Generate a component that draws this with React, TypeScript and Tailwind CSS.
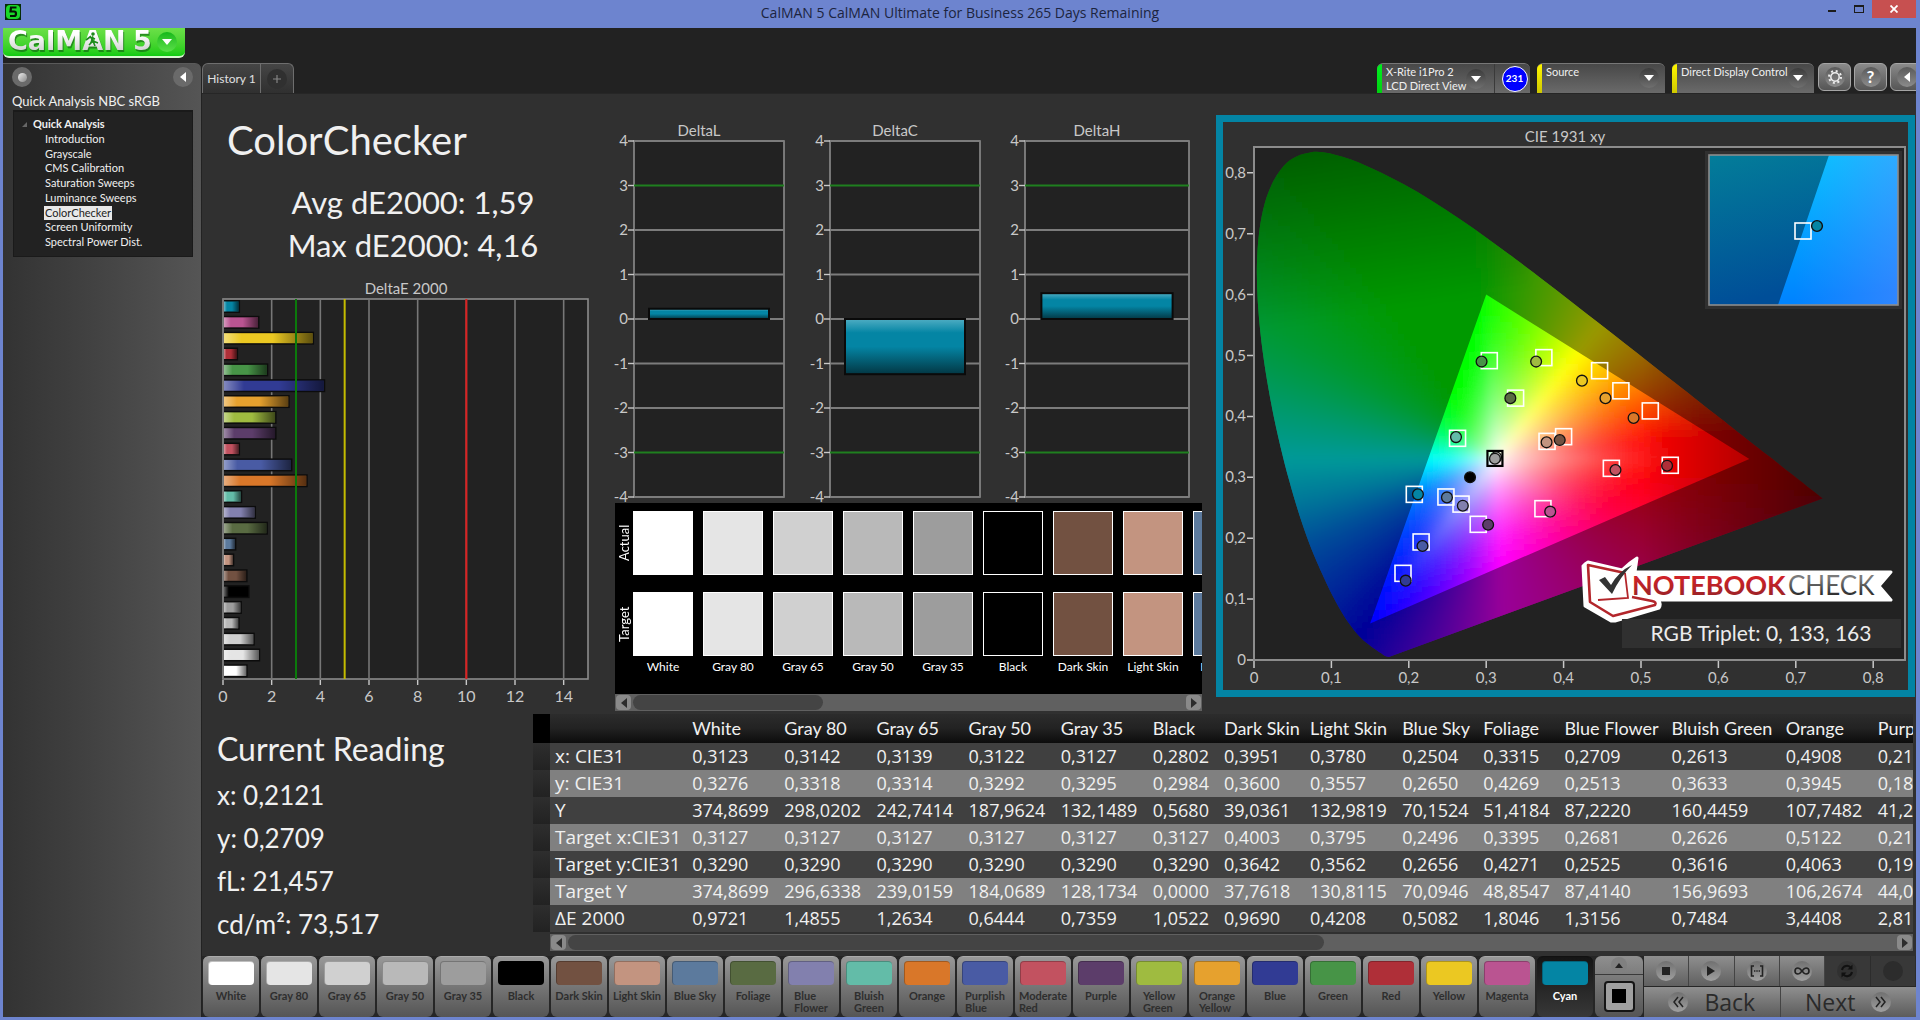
import { type ReactNode } from "react";

type Patch = { name: string; color: string; de: number; wrap?: boolean };

const patches: Patch[] = [
    { name: "White", color: "#ffffff", de: 0.9721 },
    { name: "Gray 80", color: "#e5e5e5", de: 1.4855 },
    { name: "Gray 65", color: "#d0d0d0", de: 1.2634 },
    { name: "Gray 50", color: "#b9b9b9", de: 0.6444 },
    { name: "Gray 35", color: "#9d9d9d", de: 0.7359 },
    { name: "Black", color: "#000000", de: 1.0522 },
    { name: "Dark Skin", color: "#725141", de: 0.969 },
    { name: "Light Skin", color: "#c39480", de: 0.4208 },
    { name: "Blue Sky", color: "#5c7a9d", de: 0.5082 },
    { name: "Foliage", color: "#596b42", de: 1.8046 },
    { name: "Blue Flower", color: "#8280ae", de: 1.3156, wrap: true },
    { name: "Bluish Green", color: "#63bca8", de: 0.7484, wrap: true },
    { name: "Orange", color: "#d97729", de: 3.4408 },
    { name: "Purplish Blue", color: "#495ba4", de: 2.8134, wrap: true },
    { name: "Moderate Red", color: "#c25260", de: 0.66, wrap: true },
    { name: "Purple", color: "#5c3d6a", de: 2.16 },
    { name: "Yellow Green", color: "#9fbb40", de: 2.16, wrap: true },
    { name: "Orange Yellow", color: "#e6a12e", de: 2.7, wrap: true },
    { name: "Blue", color: "#313b94", de: 4.16 },
    { name: "Green", color: "#479447", de: 1.82 },
    { name: "Red", color: "#af2f38", de: 0.58 },
    { name: "Yellow", color: "#ebc822", de: 3.7 },
    { name: "Magenta", color: "#ba5491", de: 1.46 },
    { name: "Cyan", color: "#0485a4", de: 0.66 },
];

const treeItems = [
    "Introduction",
    "Grayscale",
    "CMS Calibration",
    "Saturation Sweeps",
    "Luminance Sweeps",
    "ColorChecker",
    "Screen Uniformity",
    "Spectral Power Dist.",
];

const tableRows: { label: string; values: string[] }[] = [
    { label: "x: CIE31", values: ["0,3123", "0,3142", "0,3139", "0,3122", "0,3127", "0,2802", "0,3951", "0,3780", "0,2504", "0,3315", "0,2709", "0,2613", "0,4908", "0,21"] },
    { label: "y: CIE31", values: ["0,3276", "0,3318", "0,3314", "0,3292", "0,3295", "0,2984", "0,3600", "0,3557", "0,2650", "0,4269", "0,2513", "0,3633", "0,3945", "0,18"] },
    { label: "Y", values: ["374,8699", "298,0202", "242,7414", "187,9624", "132,1489", "0,5680", "39,0361", "132,9819", "70,1524", "51,4184", "87,2220", "160,4459", "107,7482", "41,2"] },
    { label: "Target x:CIE31", values: ["0,3127", "0,3127", "0,3127", "0,3127", "0,3127", "0,3127", "0,4003", "0,3795", "0,2496", "0,3395", "0,2681", "0,2626", "0,5122", "0,21"] },
    { label: "Target y:CIE31", values: ["0,3290", "0,3290", "0,3290", "0,3290", "0,3290", "0,3290", "0,3642", "0,3562", "0,2656", "0,4271", "0,2525", "0,3616", "0,4063", "0,19"] },
    { label: "Target Y", values: ["374,8699", "296,6338", "239,0159", "184,0689", "128,1734", "0,0000", "37,7618", "130,8115", "70,0946", "48,8547", "87,4140", "156,9693", "106,2674", "44,0"] },
    { label: "ΔE 2000", values: ["0,9721", "1,4855", "1,2634", "0,6444", "0,7359", "1,0522", "0,9690", "0,4208", "0,5082", "1,8046", "1,3156", "0,7484", "3,4408", "2,81"] },
];

const columnClasses = [
    "w-[92px]", "w-[92px]", "w-[92px]", "w-[92px]", "w-[92px]", "w-[71px]", "w-[86px]",
    "w-[92px]", "w-[81px]", "w-[81px]", "w-[107px]", "w-[114px]", "w-[92px]", "w-[60px]",
];

/* ---------- CIE diagram ---------- */

const locus: [number, number][] = [
    [0.1741, 0.005], [0.1689, 0.0069], [0.1644, 0.0109],
    [0.1566, 0.0177], [0.144, 0.0297], [0.1355, 0.0399], [0.1241, 0.0578], [0.1096, 0.0868],
    [0.0913, 0.1327], [0.0687, 0.2007], [0.0454, 0.295], [0.0235, 0.4127], [0.0082, 0.5384],
    [0.0039, 0.6548], [0.0139, 0.7502], [0.0389, 0.812], [0.0743, 0.8338], [0.1142, 0.8262],
    [0.1547, 0.8059], [0.1929, 0.7816], [0.2296, 0.7543], [0.2658, 0.7243], [0.3016, 0.6923],
    [0.3373, 0.6589], [0.3731, 0.6245], [0.4087, 0.5896], [0.4441, 0.5547], [0.4788, 0.5202],
    [0.5125, 0.4866], [0.5448, 0.4544], [0.5752, 0.4242], [0.6029, 0.3965], [0.627, 0.3725],
    [0.6658, 0.334], [0.6915, 0.3083], [0.714, 0.2859], [0.7347, 0.2653],
];

const targets: [number, number][] = [
    [0.304, 0.4915], [0.3745, 0.4965], [0.4465, 0.475], [0.474, 0.442], [0.512, 0.409],
    [0.338, 0.43], [0.263, 0.364], [0.3786, 0.359], [0.4, 0.3667], [0.4617, 0.3147],
    [0.5378, 0.3197], [0.2071, 0.272], [0.248, 0.2677], [0.2675, 0.256], [0.2897, 0.2228],
    [0.3733, 0.2485], [0.2159, 0.1938], [0.1925, 0.1423],
];

const readings: [number, number, string][] = [
    [0.294, 0.49, "#479447"], [0.3645, 0.49, "#9fbb40"], [0.4237, 0.4587, "#ebc822"],
    [0.4541, 0.43, "#e6a12e"], [0.4904, 0.3974, "#d97729"], [0.3312, 0.43, "#596b42"],
    [0.261, 0.366, "#63bca8"], [0.378, 0.3574, "#c39480"], [0.395, 0.3612, "#725141"],
    [0.2791, 0.3, "#000000"], [0.467, 0.312, "#c25260"], [0.5337, 0.319, "#af2f38"],
    [0.2118, 0.272, "#0485a4"], [0.2493, 0.267, "#5c7a9d"], [0.2698, 0.2534, "#8280ae"],
    [0.3025, 0.2222, "#5c3d6a"], [0.3827, 0.2436, "#ba5491"], [0.2177, 0.1872, "#495ba4"],
    [0.196, 0.1303, "#313b94"], [0.3127, 0.333, "#d0d0d0"], [0.3113, 0.3305, "#9d9d9d"],
];

const X0 = 31;
const Y0 = 538;
const px = (x: number) => X0 + x * 774;
const py = (y: number) => Y0 - y * 609;

const WHITE = [0.3127, 0.329];
const gamut: [number, number][] = [[0.64, 0.33], [0.3, 0.6], [0.15, 0.06]];

// fully saturated colour by direction from the white point, in degrees
const hues: [number, number, number, number][] = [
    [-180, 0, 1, 1],
    [-165, 0, 0.78, 1],
    [-150, 0, 0.5, 1],
    [-134, 0, 0.25, 1],
    [-121, 0, 0, 1],
    [-88, 1, 0, 1],
    [-48, 1, 0, 0.5],
    [-23, 1, 0, 0.2],
    [-4, 1, 0, 0],
    [8, 1, 0, 0],
    [58.7, 1, 1, 0],
    [95, 0, 1, 0],
    [118, 0, 1, 0],
    [130, 0, 1, 0.14],
    [143, 0, 1, 0.32],
    [152, 0, 1, 0.48],
    [165, 0, 1, 0.73],
    [180, 0, 1, 1],
];

function edgeDistance(dx: number, dy: number) {
    let best = Infinity;
    for (let i = 0; i < 3; i++) {
        const [ax, ay] = gamut[i];
        const [bx, by] = gamut[(i + 1) % 3];
        const ex = bx - ax;
        const ey = by - ay;
        const det = dx * ey - dy * ex;
        const t = ((ax - WHITE[0]) * ey - (ay - WHITE[1]) * ex) / det;
        if (t > 0 && t < best) best = t;
    }
    return best;
}

function chromaColor(x: number, y: number) {
    const dx = x - WHITE[0];
    const dy = y - WHITE[1];
    const r = Math.hypot(dx, dy) || 0.0001;
    const angle = (Math.atan2(dy, dx) * 180) / Math.PI;
    let k = 1;
    while (k < hues.length - 1 && hues[k][0] < angle) k++;
    const a = hues[k - 1];
    const b = hues[k];
    const f = (angle - a[0]) / (b[0] - a[0]);
    // red reaches full saturation well before its corner of the triangle
    const reach = angle > -40 && angle < 40 ? 1 + 0.25 * (1 - Math.abs(angle) / 40) : 1;
    const s = Math.min(1, (r / edgeDistance(dx / r, dy / r)) * reach);
    const wash = Math.pow(1 - s, 1.6);
    const dim =
        (1 - Math.max(0, x - 0.5) * 2.1) *
        (1 - (x < 0.36 ? Math.max(0, y - 0.6 + (0.3 - x) * 0.2) * 1.35 : 0));
    const rgb = [1, 2, 3].map((c) => {
        const h = a[c] + (b[c] - a[c]) * f;
        return Math.round(255 * dim * (h + (1 - h) * wash));
    });
    return `rgb(${rgb.join(",")})`;
}

const CELL = 6;
const cells: { x: number; y: number; fill: string }[] = [];
for (let cx = X0 - 12; cx < 630; cx += CELL) {
    for (let cy = 8; cy < Y0 + 12; cy += CELL) {
        const x = (cx + CELL / 2 - X0) / 774;
        const y = (Y0 - cy - CELL / 2) / 609;
        if (x + y > 1.08) continue;
        cells.push({ x: cx, y: cy, fill: chromaColor(x, y) });
    }
}

function smoothPath(pts: [number, number][]) {
    const p = pts.map(([x, y]) => [px(x), py(y)]);
    let d = `M${p[0][0]} ${p[0][1]}`;
    for (let i = 0; i < p.length - 1; i++) {
        const p0 = p[i - 1] ?? p[i];
        const [p1, p2] = [p[i], p[i + 1]];
        const p3 = p[i + 2] ?? p2;
        d += `C${p1[0] + (p2[0] - p0[0]) / 6} ${p1[1] + (p2[1] - p0[1]) / 6} ${p2[0] - (p3[0] - p1[0]) / 6} ${p2[1] - (p3[1] - p1[1]) / 6} ${p2[0]} ${p2[1]}`;
    }
    return d + "Z";
}

function CieChart() {
    const ticks = [0, 1, 2, 3, 4, 5, 6, 7, 8];
    const label = (t: number) => (t === 0 ? "0" : `0,${t}`);
    return (
        <svg viewBox="0 0 685 568" className="block w-full bg-[#303030] font-['Lato',sans-serif]">
            <defs>
                <clipPath id="locus"><path d={smoothPath(locus)} /></clipPath>
                <filter id="soften" x="0" y="0" width="1" height="1"><feGaussianBlur stdDeviation="4" /></filter>
                <linearGradient id="insetDark" x1="0" y1="0" x2="0.2" y2="1">
                    <stop offset="0" stopColor="#037d99" />
                    <stop offset="1" stopColor="#004e98" />
                </linearGradient>
                <linearGradient id="insetLight" x1="0" y1="0" x2="0.1" y2="1">
                    <stop offset="0" stopColor="#00caff" />
                    <stop offset="0.6" stopColor="#009eff" />
                    <stop offset="1" stopColor="#0084ff" />
                </linearGradient>
                <linearGradient id="insetEdge" x1="0" y1="0" x2="1" y2="0">
                    <stop offset="0.45" stopColor="#7088ff" stopOpacity="0" />
                    <stop offset="1" stopColor="#7088ff" stopOpacity="0.42" />
                </linearGradient>
                <linearGradient id="nbRed" x1="0" y1="0" x2="0" y2="1">
                    <stop offset="0.3" stopColor="#cf2228" />
                    <stop offset="1" stopColor="#8d2226" />
                </linearGradient>
                <linearGradient id="nbGray" x1="0" y1="0" x2="0" y2="1">
                    <stop offset="0.3" stopColor="#7a7a7a" />
                    <stop offset="1" stopColor="#111111" />
                </linearGradient>
            </defs>
            <text x="342" y="20" textAnchor="middle" fontSize="15" fill="#c8c8c8">CIE 1931 xy</text>
            <rect x="31" y="25" width="651" height="513" fill="#222222" stroke="#8c8c8c" strokeWidth="2" />
            <g clipPath="url(#locus)">
                <g filter="url(#soften)" shapeRendering="crispEdges">
                    {cells.map((c) => (
                        <rect key={`${c.x}-${c.y}`} x={c.x} y={c.y} width={CELL} height={CELL} fill={c.fill} />
                    ))}
                </g>
                <path
                    fillRule="evenodd"
                    fill="#000"
                    fillOpacity="0.4"
                    d={`M0 0H685V568H0Z M${gamut.map(([x, y]) => `${px(x)} ${py(y)}`).join(" L")}Z`}
                />
            </g>

            {ticks.map((t) => (
                <g key={t} fill="#c8c8c8" fontSize="15">
                    <path d={`M${px(t / 10)} 539v7 M24 ${py(t / 10)}h6`} stroke="#c8c8c8" strokeWidth="1.5" />
                    <text x={px(t / 10)} y="561" textAnchor="middle">{label(t)}</text>
                    <text x="23" y={py(t / 10) + 5} textAnchor="end">{label(t)}</text>
                </g>
            ))}

            {targets.map(([x, y]) => (
                <rect key={`${x}-${y}`} x={px(x) - 8} y={py(y) - 8} width="16" height="16" fill="none" stroke="#fff" strokeWidth="1.6" />
            ))}
            {readings.map(([x, y, fill]) => (
                <circle key={`${x}-${y}`} cx={px(x)} cy={py(y)} r="5.4" fill={fill} stroke="#111" strokeWidth="1.3" />
            ))}
            <rect x={px(0.3113) - 7.5} y={py(0.331) - 7.5} width="15" height="15" fill="none" stroke="#000" strokeWidth="2.2" />

            {/* zoomed inset around the selected patch */}
            <rect x="482" y="29" width="197" height="158" fill="#303030" />
            <rect x="486" y="33" width="189" height="150" fill="url(#insetLight)" />
            <rect x="486" y="33" width="189" height="150" fill="url(#insetEdge)" />
            <path d="M486 33H606L555 183H486Z" fill="url(#insetDark)" />
            <rect x="486" y="33" width="189" height="150" fill="none" stroke="#8c8c8c" strokeWidth="1.6" />
            <rect x="572" y="101" width="16" height="16" fill="none" stroke="#fff" strokeWidth="1.6" />
            <circle cx="594" cy="104" r="5.4" fill="#0485a4" stroke="#111" strokeWidth="1.4" />

            {/* watermark */}
            <g transform="translate(-1223 -122)">
                <path
                    d="M1585 564 L1588 562 L1622 570 Q1629 563 1637 558 L1635 572 H1891 L1879 586 L1891 600 H1657 Q1662 603 1659 608 L1615 621 L1611 621 L1585 606 L1583 566Z"
                    fill="#fff"
                    stroke="#fff"
                    strokeWidth="3"
                    strokeLinejoin="round"
                />
                <path d="M1625 573 L1588 565 L1590 602 L1613 616 L1655 605 Q1657 602 1652 601 L1632 597" fill="none" stroke="#b3262b" strokeWidth="2.6" strokeLinejoin="round" />
                <path d="M1625 573 L1628 598 L1598 600" fill="none" stroke="#b3262b" strokeWidth="1.8" />
                <path d="M1599 580 L1605 577 L1611 585 Q1619 571 1632 565 Q1620 577 1612 594 Z" fill="#333" />
                <text x="1632" y="595" fontSize="27" fontWeight="700" fill="url(#nbRed)">NOTEBOOK</text>
                <text x="1788" y="595" fontSize="26" fill="url(#nbGray)">CHECK</text>
            </g>

            <rect x="399" y="497" width="279" height="29" fill="#303030" />
            <text x="538" y="519" textAnchor="middle" fontSize="21" fill="#ececec">RGB Triplet: 0, 133, 163</text>
        </svg>
    );
}

/* ---------- bar charts ---------- */

function DeltaEChart() {
    const unit = 365 / 15;
    const bars = [...patches].reverse();
    const line = (v: number, color: string) => (
        <path d={`M${21 + v * unit} 29v380`} stroke={color} strokeWidth="2" />
    );
    return (
        <svg viewBox="0 0 402 440" className="block w-full font-['Lato',sans-serif]">
            <defs>
                <linearGradient id="barShade" x1="0" y1="0" x2="1" y2="0">
                    <stop offset="0" stopColor="#fff" stopOpacity="0.4" />
                    <stop offset="0.2" stopColor="#fff" stopOpacity="0" />
                    <stop offset="0.55" stopColor="#000" stopOpacity="0" />
                    <stop offset="1" stopColor="#000" stopOpacity="0.6" />
                </linearGradient>
            </defs>
            <text x="204" y="24" textAnchor="middle" fontSize="15" fill="#c8c8c8">DeltaE 2000</text>
            <rect x="21" y="29" width="365" height="380" fill="#222" stroke="#8c8c8c" strokeWidth="1.6" />
            {[0, 2, 4, 6, 8, 10, 12, 14].map((v) => (
                <g key={v}>
                    <path d={`M${21 + v * unit} 29v380`} stroke="#777" strokeWidth="1.6" />
                    <path d={`M${21 + v * unit} 410v5`} stroke="#c8c8c8" strokeWidth="1.4" />
                    <text x={21 + v * unit} y="432" textAnchor="middle" fontSize="16" fill="#c8c8c8">{v}</text>
                </g>
            ))}
            {bars.map((b, i) => {
                const y = 30.5 + i * 15.84;
                return (
                    <g key={b.name}>
                        <rect x="22" y={y - 0.5} width={b.de * unit} height="13" fill="#0c0c0c" />
                        <rect x="22" y={y + 1} width={b.de * unit - 1.5} height="10" fill={b.color} />
                        <rect x="22" y={y + 1} width={b.de * unit - 1.5} height="10" fill="url(#barShade)" />
                    </g>
                );
            })}
            {line(3, "#0b7a0b")}
            {line(5, "#c4bc00")}
            {line(10, "#dd2020")}
        </svg>
    );
}

function DeltaChart({ title, value, width, plot }: { title: string; value: number; width: number; plot: number }) {
    const zero = 199;
    const unit = 44.5;
    const h = Math.abs(value) * unit;
    const y = value > 0 ? zero - h : zero;
    return (
        <svg viewBox={`0 0 ${width} 383`} className="block min-w-0 overflow-visible font-['Lato',sans-serif]" style={{ width }}>
            <defs>
                <linearGradient id="glass" x1="0" y1="0" x2="0" y2="1">
                    <stop offset="0" stopColor="#4fadc3" />
                    <stop offset="0.25" stopColor="#0485a4" />
                    <stop offset="0.5" stopColor="#0485a4" />
                    <stop offset="1" stopColor="#033744" />
                </linearGradient>
            </defs>
            <text x={20 + plot / 2} y="16" textAnchor="middle" fontSize="15" fill="#c8c8c8">{title}</text>
            <rect x="30" y="21" width={plot} height="356" fill="#222" stroke="#8c8c8c" strokeWidth="1.6" />
            {[4, 3, 2, 1, 0, -1, -2, -3, -4].map((v) => (
                <g key={v}>
                    <path
                        d={`M30 ${zero - v * unit}h${plot}`}
                        stroke={Math.abs(v) === 3 ? "#1f7f1f" : "#7c7c7c"}
                        strokeWidth="1.8"
                    />
                    <path d={`M24 ${zero - v * unit}h6`} stroke="#c8c8c8" strokeWidth="1.4" />
                    <text x="24" y={zero - v * unit + 5} textAnchor="end" fontSize="15" fill="#c8c8c8">{v}</text>
                </g>
            ))}
            <rect x={30 + plot * 0.1} y={y} width={plot * 0.8} height={h} fill="url(#glass)" stroke="#0a0a0a" strokeWidth="2" />
        </svg>
    );
}

/* ---------- small parts ---------- */

function ScrollBar({ thumb, label }: { thumb: string; label: string }) {
    const arrow = "flex h-[15px] w-[15px] items-center justify-center rounded-sm bg-[#8a8a8a]";
    return (
        <div className="flex h-[17px] items-center bg-[#606060] px-px">
            <button className={arrow} aria-label={`Scroll ${label} left`}>
                <svg viewBox="0 0 8 10" className="h-2.5 w-2"><path d="M7 0v10L1 5z" fill="#2c2c2c" /></svg>
            </button>
            <div className="flex flex-1 px-0.5">
                <div className={`h-[15px] rounded-lg bg-[#444] ${thumb}`} />
            </div>
            <button className={arrow} aria-label={`Scroll ${label} right`}>
                <svg viewBox="0 0 8 10" className="h-2.5 w-2"><path d="M1 0v10l6-5z" fill="#2c2c2c" /></svg>
            </button>
        </div>
    );
}

function Round({ children, className = "" }: { children?: ReactNode; className?: string }) {
    return (
        <span className={`flex h-5 w-5 shrink-0 items-center justify-center rounded-full ${className}`}>{children}</span>
    );
}

const DownArrow = () => (
    <svg viewBox="0 0 10 6" className="h-1.5 w-2.5"><path d="M0 0h10L5 6z" fill="#fff" /></svg>
);

function DeviceSelect({ name, className, option }: { name: string; className: string; option: string }) {
    return (
        <div className={`relative flex h-[30px] overflow-hidden rounded-t-md border-t border-[#777] bg-linear-to-b from-[#484848] to-[#6a6a6a] ${className}`}>
            <span className="w-[5px] shrink-0 bg-linear-to-b from-[#fff600] to-[#cfc800]" />
            <select aria-label={name} className="min-w-0 flex-1 appearance-none pb-3.5 pl-1 text-[11px] leading-[14px] text-[#f0f0f0]">
                <option>{option}</option>
            </select>
            <Round className="pointer-events-none absolute top-1 right-1.5 bg-linear-to-b from-[#3c3c3c] to-[#707070]">
                <DownArrow />
            </Round>
        </div>
    );
}

function TopBar() {
    const square = "flex h-7 w-[33px] items-center justify-center rounded-md border border-[#a5a5a5] bg-linear-to-b from-[#8a8a8a] to-[#565656]";
    const knob = "bg-linear-to-b from-[#5a5a5a] to-[#8c8c8c]";
    return (
        <div className="flex h-[30px] items-start">
            <div className="flex h-[30px] rounded-t-md border border-b-0 border-[#6e6e6e] bg-linear-to-b from-[#454545] to-[#303030]">
                <button className="w-[58px] border-r border-[#6e6e6e] text-[12px] text-[#e0e0e0]">History 1</button>
                <button aria-label="Add history" className="flex w-8 items-center justify-center">
                    <Round className="bg-[#303030]">
                        <svg viewBox="0 0 10 10" className="h-2 w-2"><path d="M5 0v10M0 5h10" stroke="#888" strokeWidth="1.4" /></svg>
                    </Round>
                </button>
            </div>
            <div className="flex-1" />
            <div className="flex h-[30px] w-[153px] overflow-hidden rounded-t-md border-t border-[#777] bg-linear-to-b from-[#484848] to-[#6a6a6a]">
                <span className="w-[5px] shrink-0 bg-linear-to-b from-[#00f020] to-[#00d010]" />
                <button className="flex min-w-0 flex-1 items-center border-r border-[#3a3a3a] pl-1 text-left text-[11px] text-[#f0f0f0]">
                    <span className="min-w-0 flex-1 leading-[14px] whitespace-nowrap">X-Rite i1Pro 2<br />LCD Direct View</span>
                    <Round className="mr-2 bg-linear-to-b from-[#3c3c3c] to-[#707070]"><DownArrow /></Round>
                </button>
                <span className="flex w-[35px] shrink-0 items-center justify-center pl-1">
                    <span className="flex h-[26px] w-[26px] items-center justify-center rounded-full border border-white bg-[#0000ff] text-[10px] font-bold text-white">231</span>
                </span>
            </div>
            <DeviceSelect name="Source" option="Source" className="ml-[7px] w-[128px]" />
            <DeviceSelect name="Display control" option="Direct Display Control" className="ml-[7px] w-[142px]" />
            <div className="ml-1 flex w-[98px] gap-[3px] overflow-hidden">
                <button aria-label="Settings" className={`${square} shrink-0`}>
                    <Round className={knob}>
                        <svg viewBox="0 0 16 16" className="h-4 w-4" fill="none" stroke="#eee">
                            <circle cx="8" cy="8" r="4.2" strokeWidth="1.5" />
                            <circle cx="8" cy="8" r="6" strokeWidth="2" strokeDasharray="2 2.71" />
                        </svg>
                    </Round>
                </button>
                <button aria-label="Help" className={`${square} shrink-0 text-[17px] font-bold text-white`}>
                    <Round className={knob}>?</Round>
                </button>
                <button aria-label="Collapse panel" className={`${square} shrink-0`}>
                    <Round className={knob}>
                        <svg viewBox="0 0 6 10" className="h-2.5 w-1.5"><path d="M6 0v10L0 5z" fill="#fff" /></svg>
                    </Round>
                </button>
            </div>
        </div>
    );
}

function Sidebar() {
    return (
        <aside className="flex w-[198px] shrink-0 flex-col rounded-tr-md border-t border-[#5a5a5a] bg-linear-to-r from-[#333] to-[#555]">
            <div className="flex items-start justify-between pt-[3px] pr-2 pl-[9px]">
                <button aria-label="Record" className="flex h-5 w-5 items-center justify-center rounded-full bg-[#6a6a6a]">
                    <span className="h-[9px] w-[9px] rounded-full bg-linear-to-br from-[#f0f0f0] to-[#888]" />
                </button>
                <button aria-label="Collapse sidebar" className="flex h-5 w-5 items-center justify-center rounded-full bg-[#6a6a6a]">
                    <svg viewBox="0 0 6 10" className="h-2.5 w-1.5"><path d="M6 0v10L0 5z" fill="#fff" /></svg>
                </button>
            </div>
            <h2 className="mt-[5px] pl-[9px] text-[13px] leading-[18px] whitespace-nowrap text-[#f0f0f0]">Quick Analysis NBC sRGB</h2>
            <nav className="ml-[10px] h-[147px] w-[180px] border border-t-2 border-[#1a1a1a] bg-[#222] pt-1 text-[11px] text-[#f0f0f0]">
                <div className="flex items-center gap-1.5 pl-2 leading-4 font-bold">
                    <svg viewBox="0 0 5 5" className="h-[5px] w-[5px]"><path d="M5 0v5H0z" fill="#666" /></svg>
                    Quick Analysis
                </div>
                <ul className="flex h-[117px] flex-col justify-between pl-[30px] leading-[14px]">
                    {treeItems.map((item) => (
                        <li key={item} className="flex">
                            <a href="#" className={item === "ColorChecker" ? "bg-[#e8e8e8] px-px text-[#222]" : "px-px"}>{item}</a>
                        </li>
                    ))}
                </ul>
            </nav>
        </aside>
    );
}

function SwatchPanel() {
    return (
        <div className="relative ml-[11px] w-[587px]">
            <div className="flex h-[191px] overflow-hidden bg-black pt-2 text-white">
                <div className="flex w-[18px] shrink-0 flex-col gap-[17px] text-[13px] leading-4">
                    <span className="flex h-16 rotate-180 items-center justify-center [writing-mode:vertical-rl]">Actual</span>
                    <span className="flex h-16 rotate-180 items-center justify-center [writing-mode:vertical-rl]">Target</span>
                </div>
                {patches.slice(0, 9).map((p) => (
                    <div key={p.name} className="mr-[10px] flex w-[60px] shrink-0 flex-col gap-[17px]">
                        <div className="h-16 border border-white" style={{ backgroundColor: p.color }} />
                        <div className="h-16 border border-white" style={{ backgroundColor: p.color }} />
                        <span className="-mt-[14px] text-center text-[12px] leading-4 whitespace-nowrap">{p.name}</span>
                    </div>
                ))}
            </div>
            <ScrollBar label="swatches" thumb="w-[190px]" />
        </div>
    );
}

function DataTable() {
    return (
        <div className="mr-[3px] min-w-0 flex-1">
            <div className="overflow-hidden">
                <table className="w-[1400px] table-fixed border-collapse text-left text-[18px] whitespace-nowrap">
                    <thead>
                        <tr className="h-[29px] bg-linear-to-b from-[#2c2c2c] via-[#222] to-[#0c0c0c] font-['Lato',sans-serif] leading-[27px] text-[#f0f0f0]">
                            <th className="w-[17px] bg-black p-0" />
                            <th className="w-[137px] p-0" />
                            {patches.slice(0, 14).map((p, i) => (
                                <th key={p.name} className={`p-0 pl-[5px] font-normal ${columnClasses[i]}`}>{p.name}</th>
                            ))}
                        </tr>
                    </thead>
                    <tbody className="font-['Open_Sans',sans-serif] text-[#f0f0f0]">
                        {tableRows.map((row, r) => (
                            <tr key={row.label} className={`h-[27px] leading-[27px] ${r % 2 ? "bg-[#808080]" : "bg-[#404040]"}`}>
                                <td className="bg-linear-to-b from-[#2e2e2e] to-[#222] p-0" />
                                <th className="p-0 pl-[5px] text-[19px] leading-[27px] font-normal">{row.label}</th>
                                {row.values.map((v, i) => (
                                    <td key={i} className="p-0 pl-[5px]">{v}</td>
                                ))}
                            </tr>
                        ))}
                    </tbody>
                </table>
            </div>
            <div className="mt-0.5 ml-[17px]">
                <ScrollBar label="table" thumb="w-[57%]" />
            </div>
        </div>
    );
}

function BottomBar() {
    const ctl = "flex flex-1 items-center justify-center border-r border-[#444] bg-linear-to-b from-[#8f8f8f] to-[#606060]";
    const off = "flex flex-1 items-center justify-center border-r border-[#2c2c2c] bg-[#383838]";
    const knob = "bg-linear-to-b from-[#707070] to-[#a0a0a0]";
    const nav = "flex flex-1 items-center justify-center gap-4 bg-linear-to-b from-[#8f8f8f] to-[#5c5c5c] font-['Open_Sans',sans-serif] text-[23px] leading-7 font-medium text-[#2a2a2a]";
    return (
        <footer className="mt-[5px] flex h-[61px] bg-[#262626] pl-px">
            <div className="flex gap-0.5">
                {patches.map((p) => {
                    const active = p.name === "Cyan";
                    return (
                        <button
                            key={p.name}
                            className={`flex w-14 flex-col items-center rounded-md border-t pt-1 text-[11px] leading-3 font-bold ${active ? "border-[#111] bg-linear-to-b from-[#151515] to-[#383838] text-white" : "border-[#aaa] bg-linear-to-b from-[#989898] to-[#555] text-[#2e2e2e]"}`}
                        >
                            <span className="h-6 w-[46px] rounded-sm border-t border-l border-black/25" style={{ backgroundColor: p.color }} />
                            <span className={`mt-[5px] text-left ${p.wrap ? "w-min" : "whitespace-nowrap"}`}>{p.name}</span>
                        </button>
                    );
                })}
            </div>
            <div className="ml-0.5 flex w-12 flex-col rounded-md bg-linear-to-b from-[#8f8f8f] to-[#555]">
                <button aria-label="Expand" className="flex h-[19px] items-center justify-center border-b border-[#3a3a3a]">
                    <span className="flex h-4 w-4 items-center justify-center rounded-full bg-[#808080]">
                        <svg viewBox="0 0 8 5" className="h-[5px] w-2"><path d="M0 5h8L4 0z" fill="#222" /></svg>
                    </span>
                </button>
                <button aria-label="Pattern window" className="flex flex-1 items-center justify-center">
                    <span className="flex h-[31px] w-[31px] items-center justify-center rounded-sm border-2 border-[#151515] bg-[#a0a0a0]">
                        <span className="h-3.5 w-3.5 bg-black" />
                    </span>
                </button>
            </div>
            <div className="ml-px flex flex-1 flex-col gap-px">
                <div className="flex h-[30px]">
                    <button aria-label="Stop" className={ctl}><Round className={knob}><span className="h-2 w-2 bg-[#222]" /></Round></button>
                    <button aria-label="Play" className={ctl}>
                        <Round className={knob}><svg viewBox="0 0 8 10" className="h-2.5 w-2"><path d="M0 0v10l8-5z" fill="#222" /></svg></Round>
                    </button>
                    <button aria-label="Read series" className={ctl}>
                        <Round className={knob}>
                            <svg viewBox="0 0 14 12" className="h-3 w-3.5" fill="none" stroke="#222" strokeWidth="1.6">
                                <path d="M4 1H1.5v10H4M10 1h2.5v10H10M4 6h1.4M6.3 6h1.4M8.6 6H10" />
                            </svg>
                        </Round>
                    </button>
                    <button aria-label="Read continuously" className={ctl}>
                        <Round className={knob}>
                            <svg viewBox="0 0 16 8" className="h-2 w-4" fill="none" stroke="#222" strokeWidth="1.6">
                                <path d="M8 4C6.5 2 5.5 1 4 1a3 3 0 0 0 0 6c1.500 0 2.500-1 4-3s2.500-3 4-3a3 3 0 0 1 0 6c-1.500 0-2.500-1-4-3z" />
                            </svg>
                        </Round>
                    </button>
                    <button aria-label="Refresh" className={off}>
                        <Round className="bg-[#303030]">
                            <svg viewBox="0 0 14 14" className="h-3.5 w-3.5" fill="none" stroke="#111" strokeWidth="2">
                                <path d="M2 6a5 5 0 0 1 9-2M12 8a5 5 0 0 1-9 2" />
                                <path d="M12.500 0.500v5h-5zM1.500 13.500v-5h5z" fill="#111" stroke="none" />
                            </svg>
                        </Round>
                    </button>
                    <button aria-label="Record" className={off}><Round className="bg-[#2c2c2c]" /></button>
                </div>
                <div className="flex flex-1">
                    <button className={`${nav} border-r border-[#444]`}>
                        <Round className={knob}>
                            <svg viewBox="0 0 12 12" className="h-3 w-3" fill="none" stroke="#222" strokeWidth="1.5"><path d="M6 1L2 6l4 5M11 1L7 6l4 5" /></svg>
                        </Round>
                        Back
                    </button>
                    <button className={nav}>
                        Next
                        <Round className={knob}>
                            <svg viewBox="0 0 12 12" className="h-3 w-3" fill="none" stroke="#222" strokeWidth="1.5"><path d="M1 1l4 5-4 5M6 1l4 5-4 5" /></svg>
                        </Round>
                    </button>
                </div>
            </div>
        </footer>
    );
}

function TitleBar() {
    return (
        <header className="relative flex h-7 items-start bg-[#6d84cf]">
            <svg viewBox="0 0 16 16" className="mt-1 ml-[5px] h-4 w-4">
                <rect width="16" height="16" fill="#062c06" />
                <rect x="1" y="1" width="14" height="14" rx="4" fill="#19d929" />
                <path d="M11.500 3.500H6L5.500 7.500H9Q11 7.500 11 9.700T9 12H5" fill="none" stroke="#041504" strokeWidth="2.2" />
            </svg>
            <h1 className="mr-[21px] flex-1 text-center font-['Open_Sans',sans-serif] text-[14px] leading-[26px] text-[#1c2440]">
                CalMAN 5 CalMAN Ultimate for Business 265 Days Remaining
            </h1>
            <div className="absolute top-0 right-1 flex">
                <button aria-label="Minimize" className="flex h-[18px] w-7 items-end justify-center pb-1.5"><span className="h-0.5 w-2 bg-[#1c1c1c]" /></button>
                <button aria-label="Maximize" className="flex h-[18px] w-[26px] items-center justify-center"><span className="h-2 w-2.5 border border-t-2 border-[#1c1c1c]" /></button>
                <button aria-label="Close" className="flex h-[18px] w-11 items-center justify-center bg-[#c75050]">
                    <svg viewBox="0 0 8 8" className="h-2 w-2"><path d="M0.500 0.500l7 7M7.500 0.500l-7 7" stroke="#fff" strokeWidth="1.8" /></svg>
                </button>
            </div>
        </header>
    );
}

export default function App() {
    return (
        <div className="flex min-h-screen flex-col bg-[#6d84cf] font-['Lato',sans-serif]">
            <TitleBar />
            <div className="mr-1 mb-[3px] ml-[3px] flex flex-1 flex-col overflow-hidden bg-[#222]">
                <div className="h-[35px]">
                    <button aria-label="CalMAN menu" className="flex h-[30px] w-[182px] items-center rounded-b-md border-b-2 border-[#d8f8d0] bg-linear-to-b from-[#6be048] to-[#0ccb10] pl-1">
                        <svg viewBox="0 0 150 28" className="h-7 w-[150px] overflow-visible">
                            <defs>
                                <linearGradient id="chrome" x1="0" y1="0" x2="0" y2="1">
                                    <stop offset="0.3" stopColor="#fff" />
                                    <stop offset="1" stopColor="#c4c4c4" />
                                </linearGradient>
                            </defs>
                            <g
                                fontFamily="DejaVu Sans"
                                fontWeight="700"
                                fontSize="27"
                                fill="url(#chrome)"
                                className="drop-shadow-[1px_2px_0_rgba(20,110,20,0.7)]"
                            >
                                <text x="1" y="22">CalMAN</text>
                                <text x="126" y="22">5</text>
                            </g>
                            <path d="M83 8l3 5-4 4M86 13l5 2M79 12l4-3 5 2M86 13l2 5" stroke="#1d8a1d" strokeWidth="1.6" fill="none" />
                            <circle cx="86" cy="6" r="1.800" fill="#1d8a1d" />
                        </svg>
                        <Round className="bg-linear-to-b from-[#10b818] to-[#58e048]"><DownArrow /></Round>
                    </button>
                </div>
                <div className="flex flex-1">
                    <Sidebar />
                    <div className="flex min-w-0 flex-1 flex-col border-l border-[#222]">
                        <TopBar />
                        <main className="flex flex-1 flex-col border-t border-[#262626] bg-[#303030] text-[#f0f0f0]">
                            <div className="flex items-start">
                                <section className="w-[402px] shrink-0 pt-[22px]">
                                    <h2 className="pl-[25px] text-[40px] leading-[48px]">ColorChecker</h2>
                                    <p className="mt-[17px] pl-5 text-center text-[31px] leading-[43px]">
                                        Avg dE2000: 1,59<br />Max dE2000: 4,16
                                    </p>
                                    <div className="mt-[3px]"><DeltaEChart /></div>
                                </section>
                                <section className="w-[606px] shrink-0 pt-[26px]">
                                    <div className="flex">
                                        <DeltaChart title="DeltaL" value={0.23} width={196} plot={150} />
                                        <DeltaChart title="DeltaC" value={-1.24} width={195} plot={150} />
                                        <DeltaChart title="DeltaH" value={0.58} width={205} plot={164} />
                                    </div>
                                    <SwatchPanel />
                                </section>
                                <section className="mt-[21px] mr-px ml-1.5 min-w-0 flex-1 border-[7px] border-[#0384a4]">
                                    <CieChart />
                                </section>
                            </div>
                            <div className="mt-[3px] flex">
                                <section className="w-[331px] shrink-0 pt-[15px] pl-[15px] text-[26px] leading-[43px]">
                                    <h3 className="mb-[5px] text-[32px] leading-10">Current Reading</h3>
                                    <p>x: 0,2121</p>
                                    <p>y: 0,2709</p>
                                    <p>fL: 21,457</p>
                                    <p>cd/m²: 73,517</p>
                                </section>
                                <DataTable />
                            </div>
                            <BottomBar />
                        </main>
                    </div>
                </div>
            </div>
        </div>
    );
}
